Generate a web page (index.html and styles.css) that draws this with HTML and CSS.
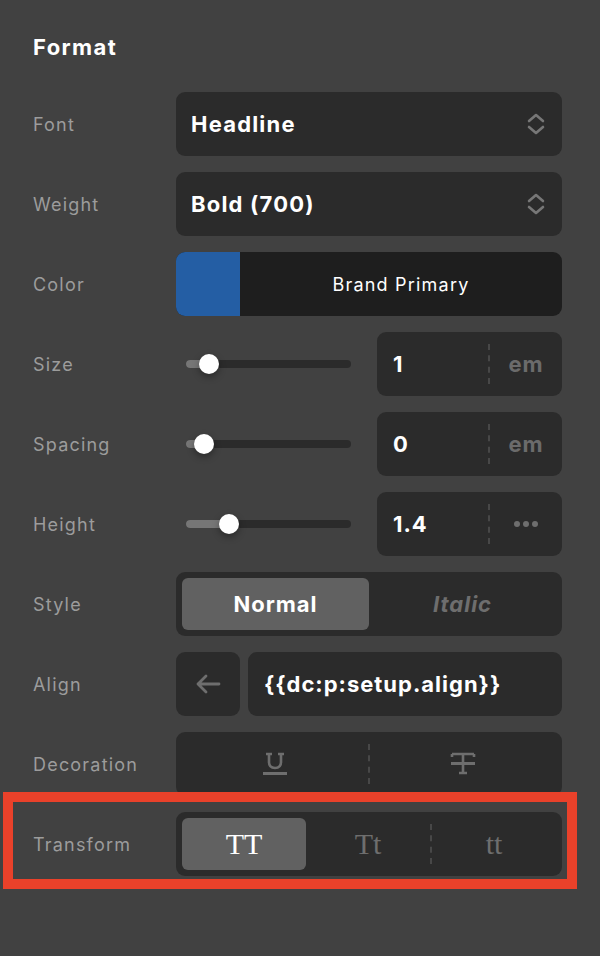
FILE: index.html
```html
<!DOCTYPE html>
<html lang="en">
<head>
    <meta charset="UTF-8">
    <meta name="viewport" content="width=device-width, initial-scale=1.0">
    <title>Format</title>
    <link rel="stylesheet" href="styles.css">
</head>
<body>
    <div class="panel">
        <h2 class="title">Format</h2>

        <div class="row">
            <span class="label">Font</span>
            <div class="select">
                <span>Headline</span>
                <svg class="chev" width="18" height="22" viewBox="0 0 18 22"><path d="M2 8 L9 2 L16 8 M2 14 L9 20 L16 14" fill="none" stroke="#777" stroke-width="2.6" stroke-linecap="round" stroke-linejoin="round"/></svg>
            </div>
        </div>

        <div class="row">
            <span class="label">Weight</span>
            <div class="select">
                <span>Bold (700)</span>
                <svg class="chev" width="18" height="22" viewBox="0 0 18 22"><path d="M2 8 L9 2 L16 8 M2 14 L9 20 L16 14" fill="none" stroke="#777" stroke-width="2.6" stroke-linecap="round" stroke-linejoin="round"/></svg>
            </div>
        </div>

        <div class="row">
            <span class="label">Color</span>
            <div class="color">
                <span class="swatch"></span>
                <span class="color-name">Brand Primary</span>
            </div>
        </div>

        <div class="row">
            <span class="label">Size</span>
            <div class="slider-group">
                <div class="slider">
                    <div class="track"><div class="fill" style="width: 14%"><span class="thumb"></span></div></div>
                </div>
                <div class="num">
                    <span class="value">1</span>
                    <span class="divider"></span>
                    <span class="unit">em</span>
                </div>
            </div>
        </div>

        <div class="row">
            <span class="label">Spacing</span>
            <div class="slider-group">
                <div class="slider">
                    <div class="track"><div class="fill" style="width: 11%"><span class="thumb"></span></div></div>
                </div>
                <div class="num">
                    <span class="value">0</span>
                    <span class="divider"></span>
                    <span class="unit">em</span>
                </div>
            </div>
        </div>

        <div class="row">
            <span class="label">Height</span>
            <div class="slider-group">
                <div class="slider">
                    <div class="track"><div class="fill" style="width: 26%"><span class="thumb"></span></div></div>
                </div>
                <div class="num">
                    <span class="value">1.4</span>
                    <span class="divider"></span>
                    <span class="unit dots"><i></i><i></i><i></i></span>
                </div>
            </div>
        </div>

        <div class="row">
            <span class="label">Style</span>
            <div class="seg">
                <span class="cell active">Normal</span>
                <span class="cell italic">Italic</span>
            </div>
        </div>

        <div class="row">
            <span class="label">Align</span>
            <div class="align">
                <span class="icon-btn">
                    <svg width="26" height="20" viewBox="0 0 26 20"><path d="M24 10 H3 M11 2 L3 10 L11 18" fill="none" stroke="#6e6e6e" stroke-width="2.8" stroke-linecap="round" stroke-linejoin="round"/></svg>
                </span>
                <span class="field">{{dc:p:setup.align}}</span>
            </div>
        </div>

        <div class="row">
            <span class="label">Decoration</span>
            <div class="seg">
                <span class="cell">
                    <svg width="26" height="26" viewBox="0 0 26 26"><path d="M4 3 H10 M16 3 H22 M7 3 V11 Q7 17 13 17 Q19 17 19 11 V3" fill="none" stroke="#6e6e6e" stroke-width="2.6"/><rect x="1" y="21" width="24" height="3" fill="#6e6e6e"/></svg>
                </span>
                <span class="sep"></span>
                <span class="cell">
                    <svg width="26" height="26" viewBox="0 0 26 26"><path d="M2 3 H24 M2 3 V6 M24 3 V6 M13 3 V22 M9 22 H17" fill="none" stroke="#6e6e6e" stroke-width="2.6"/><rect x="1" y="11" width="24" height="3" fill="#6e6e6e"/></svg>
                </span>
            </div>
        </div>

        <div class="row highlight">
            <span class="label">Transform</span>
            <div class="seg serif">
                <span class="cell active">TT</span>
                <span class="cell">Tt</span>
                <span class="sep"></span>
                <span class="cell">tt</span>
            </div>
            <span class="mark"></span>
        </div>
    </div>
</body>
</html>
```

FILE: styles.css
```css
body {
    margin: 0;
    background: #414141;
    font-family: Inter, "Liberation Sans", sans-serif;
    color: #fff;
}
.panel {
    padding: 33px 38px 40px 33px;
}
.title {
    margin: 0 0 31px;
    font-size: 22px;
    line-height: 28px;
    font-weight: 700;
    letter-spacing: 1.4px;
}
.row {
    position: relative;
    display: grid;
    grid-template-columns: 143px 1fr;
    align-items: center;
    height: 64px;
    margin-bottom: 16px;
}
.label {
    font-size: 18px;
    color: #9c9c9c;
    letter-spacing: 1.2px;
}
.select {
    display: flex;
    align-items: center;
    justify-content: space-between;
    height: 64px;
    padding: 0 17px 0 15px;
    box-sizing: border-box;
    background: #2b2b2b;
    border-radius: 9px;
    font-size: 22px;
    font-weight: 700;
    letter-spacing: 1.2px;
}
.color {
    display: flex;
    height: 64px;
    background: #1e1e1e;
    border-radius: 9px;
    overflow: hidden;
}
.swatch {
    width: 64px;
    background: #245ea4;
}
.color-name {
    flex: 1;
    display: flex;
    align-items: center;
    justify-content: center;
    font-size: 18px;
    letter-spacing: 1.2px;
}
.slider-group {
    display: grid;
    grid-template-columns: 1fr 185px;
    column-gap: 26px;
    align-items: center;
}
.slider {
    padding-left: 10px;
}
.track {
    height: 8px;
    background: #2b2b2b;
    border-radius: 4px;
}
.fill {
    position: relative;
    height: 8px;
    background: #767676;
    border-radius: 4px 0 0 4px;
}
.thumb {
    position: absolute;
    right: -10px;
    top: -6px;
    width: 20px;
    height: 20px;
    border-radius: 50%;
    background: #fff;
    box-shadow: 0 3px 7px rgba(0, 0, 0, 0.35);
}
.num {
    display: flex;
    align-items: center;
    height: 64px;
    background: #2b2b2b;
    border-radius: 9px;
    font-size: 22px;
    font-weight: 700;
    letter-spacing: 1px;
}
.value {
    flex: 1;
    padding-left: 16px;
}
.divider, .sep {
    align-self: center;
    width: 0;
    height: 40px;
    border-left: 2px dashed #484848;
}
.unit {
    width: 72px;
    text-align: center;
    color: #6b6b6b;
}
.dots {
    display: flex;
    justify-content: center;
    gap: 3px;
}
.dots i {
    width: 6px;
    height: 6px;
    border-radius: 50%;
    background: #6e6e6e;
}
.seg {
    display: flex;
    align-items: center;
    height: 64px;
    padding: 6px;
    box-sizing: border-box;
    background: #2b2b2b;
    border-radius: 9px;
}
.cell {
    flex: 1;
    display: flex;
    align-items: center;
    justify-content: center;
    height: 52px;
    border-radius: 6px;
    font-size: 22px;
    font-weight: 700;
    letter-spacing: 1px;
    color: #6e6e6e;
}
.cell.active {
    background: #616161;
    color: #fff;
}
.cell.italic {
    font-style: italic;
}
.serif .cell {
    font-family: "Liberation Serif", "DejaVu Serif", serif;
    font-weight: 400;
    font-size: 30px;
    letter-spacing: 0;
}
.align {
    display: flex;
    gap: 8px;
    height: 64px;
}
.icon-btn {
    width: 64px;
    display: flex;
    align-items: center;
    justify-content: center;
    background: #2b2b2b;
    border-radius: 9px;
}
.field {
    flex: 1;
    display: flex;
    align-items: center;
    padding-left: 16px;
    background: #2b2b2b;
    border-radius: 9px;
    font-size: 22px;
    font-weight: 700;
    letter-spacing: 1px;
}
.mark {
    position: absolute;
    left: -30px;
    right: -15px;
    top: -20px;
    bottom: -13px;
    border: 10px solid #e9412a;
    pointer-events: none;
}
```
